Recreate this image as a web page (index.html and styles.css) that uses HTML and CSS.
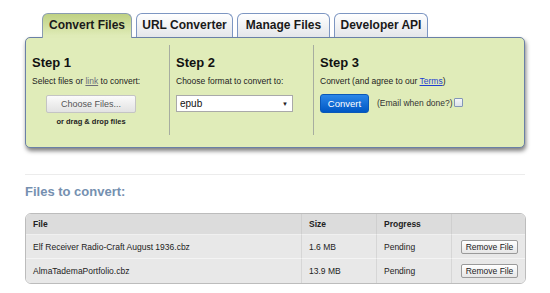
FILE: index.html
```html
<!DOCTYPE html>
<html>
<head>
<meta charset="utf-8">
<link rel="stylesheet" href="styles.css">
</head>
<body>
<div class="page">
  <div class="tabs">
    <div class="tab tab-active w1">Convert Files</div>
    <div class="tab w2">URL Converter</div>
    <div class="tab w3">Manage Files</div>
    <div class="tab w4">Developer API</div>
  </div>
  <div class="panel">
    <div class="col col1">
      <h2>Step 1</h2>
      <p class="desc">Select files or <a class="gray-link" href="#">link</a> to convert:</p>
      <div class="choose-wrap">
        <button class="choose">Choose Files...</button>
        <div class="drag">or drag &amp; drop files</div>
      </div>
    </div>
    <div class="col col2">
      <h2>Step 2</h2>
      <p class="desc">Choose format to convert to:</p>
      <div class="select"><span>epub</span><span class="arrow">▼</span></div>
    </div>
    <div class="col col3">
      <h2>Step 3</h2>
      <p class="desc">Convert (and agree to our <a class="blue-link" href="#">Terms</a>)</p>
      <div class="convert-row">
        <button class="convert">Convert</button>
        <span class="email">(Email when done?)</span>
        <span class="check"></span>
      </div>
    </div>
  </div>
  <div class="rule"></div>
  <h3 class="files-title">Files to convert:</h3>
  <table class="files">
    <thead>
      <tr><th class="c-file">File</th><th class="c-size">Size</th><th class="c-prog">Progress</th><th class="c-act"></th></tr>
    </thead>
    <tbody>
      <tr class="r1"><td>Elf Receiver Radio-Craft August 1936.cbz</td><td>1.6 MB</td><td>Pending</td><td class="act"><button class="remove">Remove File</button></td></tr>
      <tr class="r2"><td>AlmaTademaPortfolio.cbz</td><td>13.9 MB</td><td>Pending</td><td class="act"><button class="remove">Remove File</button></td></tr>
    </tbody>
  </table>
</div>
</body>
</html>
```

FILE: styles.css
```css
* { box-sizing: border-box; }
html, body { margin: 0; padding: 0; background: #fff; }
body { font-family: "Liberation Sans", Arial, sans-serif; color: #222; width: 550px; height: 293px; overflow: hidden; }
.page { margin-left: 25px; width: 500px; }

.tabs { display: flex; gap: 4px; padding-left: 17px; margin-top: 13px; height: 24px; position: relative; z-index: 2; }
.tab {
  height: 24px; border: 1px solid #7d96c2; border-bottom: none; border-radius: 6px 6px 0 0;
  background: linear-gradient(#ffffff, #e4e6ea);
  font-weight: bold; font-size: 12px; line-height: 23px; text-align: center; color: #1a1a1a;
}
.tab-active {
  height: 25px; border-color: #8a9cb0;
  background: linear-gradient(#bfd183, #dfebb7 90%);
}
.w1 { width: 90px; }
.w2 { width: 97px; }
.w3 { width: 93px; }
.w4 { width: 94px; }

.panel {
  display: flex; height: 111px; padding: 7px 0 12px 0;
  background: #e0ecb9; border: 1px solid #6a80a6; border-radius: 5px;
  box-shadow: 1px 3px 4px rgba(0,0,0,0.5);
}
.col { height: 90px; padding: 10px 0 0 6px; }
.col1 { width: 143px; }
.col2 { width: 144px; border-left: 1px solid #a7ada0; }
.col3 { flex: 1; border-left: 1px solid #a7ada0; }
h2 { margin: 0; font-size: 13px; line-height: 15px; font-weight: bold; color: #111; }
.desc { margin: 6px 0 0 0; font-size: 8.5px; line-height: 11px; color: #222; }
.gray-link { color: #6d6d7a; text-decoration: underline; }
.blue-link { color: #1f3fd0; text-decoration: underline; }

.choose-wrap { width: 90px; margin: 8px 0 0 14px; display: flex; flex-direction: column; align-items: center; }
.choose {
  width: 90px; height: 18px; padding: 0; border: 1px solid #c4c4c4; border-radius: 2px;
  background: linear-gradient(#fbfbfb, #e2e2e2);
  font-family: "Liberation Sans", Arial, sans-serif; font-size: 9px; color: #555;
}
.drag { margin-top: 4px; font-size: 7.5px; font-weight: bold; line-height: 10px; color: #222; }

.select {
  margin-top: 8px; width: 117px; height: 17px; background: #fff; border: 1px solid #a9a9a9;
  display: flex; align-items: center; justify-content: space-between; padding: 0 4px 0 3px;
  font-size: 10px; color: #111;
}
.arrow { font-size: 6px; color: #222; }

.convert-row { margin-top: 7px; display: flex; align-items: center; }
.convert {
  width: 49px; height: 19px; padding: 0; border: 1px solid #0a58b8; border-radius: 3px;
  background: linear-gradient(#2a86e8, #0057c4);
  color: #fff; font-family: "Liberation Sans", Arial, sans-serif; font-size: 9.5px;
}
.email { margin-left: 8px; font-size: 8.5px; color: #333; margin-top: -2px; }
.check {
  margin-left: 1px; margin-top: -3px; width: 9px; height: 9px; border: 1px solid #8396b8; border-radius: 1px;
  background: linear-gradient(#f4f6f9, #dde2ea);
}

.rule { margin-top: 26px; height: 1px; background: #ececec; }
.files-title { margin: 9px 0 0 0; font-size: 13px; line-height: 15px; font-weight: bold; color: #7590b0; }

.files {
  margin-top: 14px; width: 500px; border-collapse: separate; border-spacing: 0;
  border: 1px solid #bcbcbc; border-radius: 6px; overflow: hidden;
  font-size: 8.5px; color: #222; table-layout: fixed;
}
.files th, .files td { padding: 0 0 0 7px; text-align: left; vertical-align: middle; }
.files th { background: #dcdcdc; height: 21px; font-weight: bold; border-bottom: 1px solid #f0f0f0; }
.files th + th { border-left: 1px solid #cfcfcf; }
.files td { background: #e8e8e8; }
.files td + td { border-left: 1px solid #d6d6d6; }
.r1 td { height: 24px; border-bottom: 1px solid #f4f4f4; }
.r2 td { height: 24px; }
.c-file { width: 275px; }
.c-size { width: 75px; }
.c-prog { width: 75px; }
.c-act { width: 74px; }
.files td.act { text-align: right; padding-right: 7px; }
.remove {
  width: 57px; height: 14px; padding: 0; border: 1px solid #9a9a9a; border-radius: 2px;
  background: linear-gradient(#ffffff, #e6e6e6);
  font-family: "Liberation Sans", Arial, sans-serif; font-size: 8.5px; color: #222;
}
```
